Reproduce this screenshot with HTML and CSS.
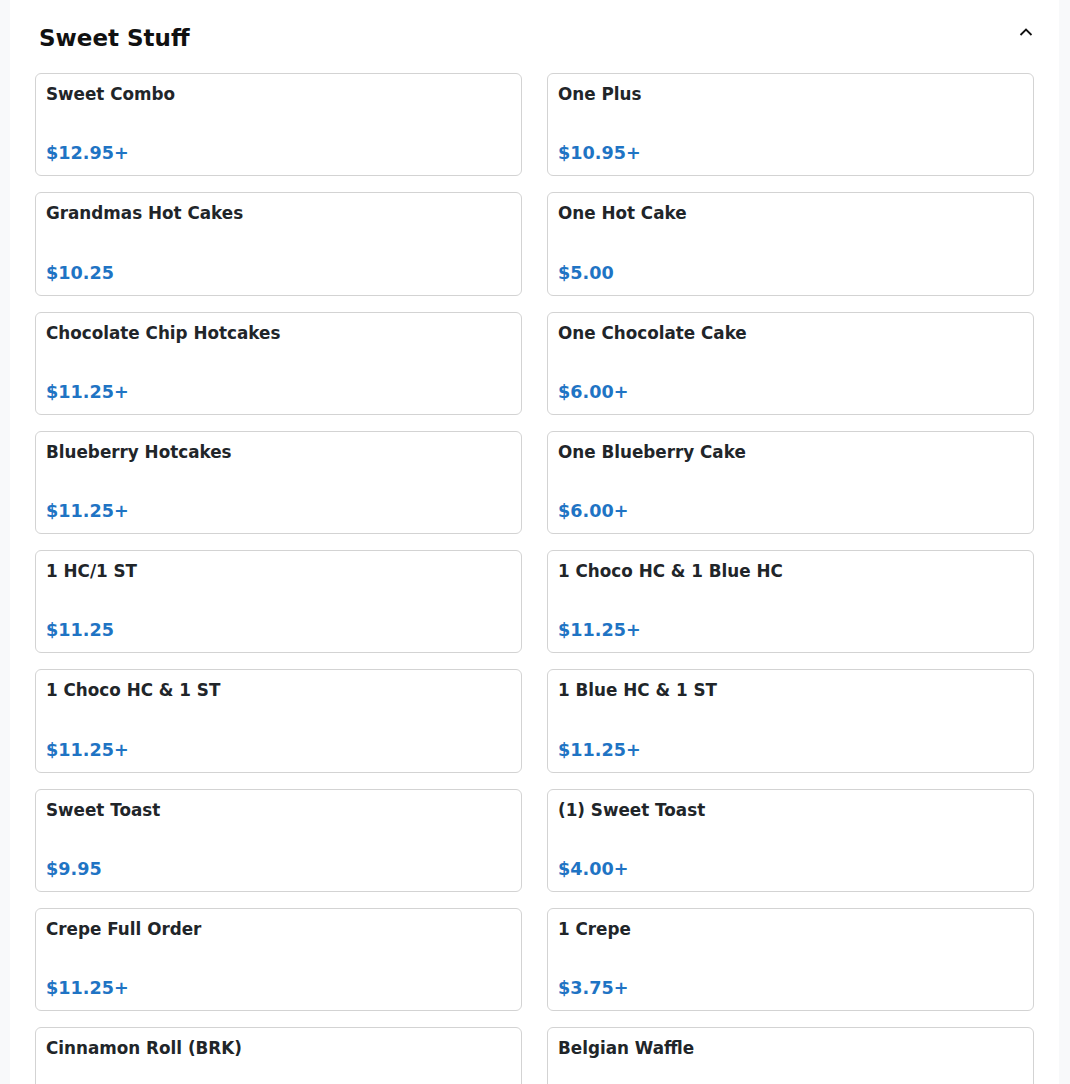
FILE: index.html
```html
<!DOCTYPE html>
<html lang="en">
<head>
<meta charset="utf-8">
<title>Sweet Stuff</title>
<link rel="stylesheet" href="styles.css">
</head>
<body>
<main class="panel">
  <header class="section-head">
    <h2 class="section-title">Sweet Stuff</h2>
    <button class="collapse-btn" aria-label="Collapse">
      <svg width="14" height="10" viewBox="0 0 14 10"><path d="M1.5 8 L7 2.5 L12.5 8" fill="none" stroke="#111" stroke-width="1.8"/></svg>
    </button>
  </header>
  <div class="grid">
    <div class="card"><div class="name">Sweet Combo</div><div class="price">$12.95+</div></div>
    <div class="card"><div class="name">One Plus</div><div class="price">$10.95+</div></div>
    <div class="card"><div class="name">Grandmas Hot Cakes</div><div class="price">$10.25</div></div>
    <div class="card"><div class="name">One Hot Cake</div><div class="price">$5.00</div></div>
    <div class="card"><div class="name">Chocolate Chip Hotcakes</div><div class="price">$11.25+</div></div>
    <div class="card"><div class="name">One Chocolate Cake</div><div class="price">$6.00+</div></div>
    <div class="card"><div class="name">Blueberry Hotcakes</div><div class="price">$11.25+</div></div>
    <div class="card"><div class="name">One Blueberry Cake</div><div class="price">$6.00+</div></div>
    <div class="card"><div class="name">1 HC/1 ST</div><div class="price">$11.25</div></div>
    <div class="card"><div class="name">1 Choco HC &amp; 1 Blue HC</div><div class="price">$11.25+</div></div>
    <div class="card"><div class="name">1 Choco HC &amp; 1 ST</div><div class="price">$11.25+</div></div>
    <div class="card"><div class="name">1 Blue HC &amp; 1 ST</div><div class="price">$11.25+</div></div>
    <div class="card"><div class="name">Sweet Toast</div><div class="price">$9.95</div></div>
    <div class="card"><div class="name">(1) Sweet Toast</div><div class="price">$4.00+</div></div>
    <div class="card"><div class="name">Crepe Full Order</div><div class="price">$11.25+</div></div>
    <div class="card"><div class="name">1 Crepe</div><div class="price">$3.75+</div></div>
    <div class="card"><div class="name">Cinnamon Roll (BRK)</div><div class="price">$4.50</div></div>
    <div class="card"><div class="name">Belgian Waffle</div><div class="price">$9.95</div></div>
  </div>
</main>
</body>
</html>
```
FILE: styles.css
```css
html, body {
  margin: 0;
  padding: 0;
  background: #f8f9fa;
  font-family: "DejaVu Sans", sans-serif;
  color: #212529;
}
.panel {
  margin: 0 11px 0 10px;
  background: #ffffff;
  padding: 24px 25px 40px 25px;
  min-height: 1100px;
  box-sizing: border-box;
}
.section-head {
  display: flex;
  align-items: center;
  justify-content: space-between;
  height: 28px;
  margin-bottom: 21px;
}
.section-title {
  margin: 0 0 0 4px;
  font-size: 23px;
  line-height: 28px;
  font-weight: bold;
  color: #111;
}
.collapse-btn {
  border: none;
  background: none;
  padding: 0;
  margin: -12px 1px 0 0;
  width: 14px;
  height: 10px;
  display: flex;
}
.grid {
  display: grid;
  grid-template-columns: 1fr 1fr;
  column-gap: 25px;
  row-gap: 16px;
}
.card {
  height: 103.25px;
  box-sizing: border-box;
  border: 1px solid #d3d3d3;
  border-radius: 6px;
  padding: 10px 10px 12px 10px;
  display: flex;
  flex-direction: column;
  justify-content: space-between;
}
.name {
  font-size: 16.8px;
  line-height: 20px;
  font-weight: bold;
  color: #212529;
}
.price {
  font-size: 17.6px;
  line-height: 20px;
  font-weight: bold;
  color: #1f74c4;
}
```
